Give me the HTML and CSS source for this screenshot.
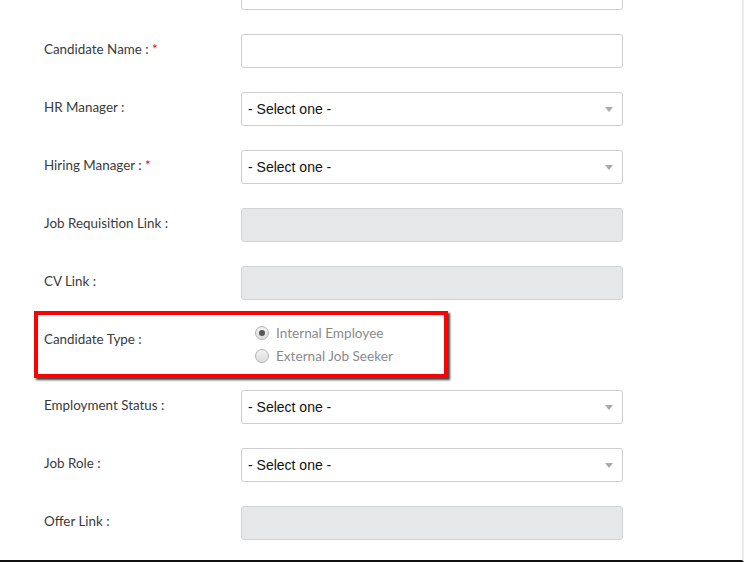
FILE: index.html
```html
<!DOCTYPE html>
<html>
<head>
<meta charset="utf-8">
<link rel="stylesheet" href="styles.css">
</head>
<body>
<div class="frame">
  <div class="form">
    <div class="row">
      <div class="label"></div>
      <div class="field input"></div>
    </div>
    <div class="row">
      <div class="label">Candidate Name : <span class="req">*</span></div>
      <div class="field input"></div>
    </div>
    <div class="row">
      <div class="label">HR Manager :</div>
      <div class="field select"><span>- Select one -</span><i class="arrow"></i></div>
    </div>
    <div class="row">
      <div class="label">Hiring Manager : <span class="req">*</span></div>
      <div class="field select"><span>- Select one -</span><i class="arrow"></i></div>
    </div>
    <div class="row">
      <div class="label">Job Requisition Link :</div>
      <div class="field disabled"></div>
    </div>
    <div class="row">
      <div class="label">CV Link :</div>
      <div class="field disabled"></div>
    </div>
    <div class="row row-radio">
      <div class="label">Candidate Type :</div>
      <div class="radios">
        <label class="radio"><span class="dot checked"></span>Internal Employee</label>
        <label class="radio"><span class="dot"></span>External Job Seeker</label>
      </div>
    </div>
    <div class="row">
      <div class="label">Employment Status :</div>
      <div class="field select"><span>- Select one -</span><i class="arrow"></i></div>
    </div>
    <div class="row">
      <div class="label">Job Role :</div>
      <div class="field select"><span>- Select one -</span><i class="arrow"></i></div>
    </div>
    <div class="row">
      <div class="label">Offer Link :</div>
      <div class="field disabled"></div>
    </div>
  </div>
</div>
</body>
</html>
```
FILE: styles.css
```css
html, body {
  margin: 0;
  padding: 0;
  background: #fff;
}
.frame {
  width: 742px;
  height: 560px;
  border-right: 2px solid #ececec;
  border-bottom: 2px solid #111;
  overflow: hidden;
  background: #fff;
}
.form {
  margin-top: -24px;
  padding-left: 44px;
  display: flex;
  flex-direction: column;
  gap: 24px;
}
.row {
  display: flex;
  align-items: flex-start;
}
.label {
  width: 197px;
  height: 34px;
  line-height: 30px;
  font-family: "Lato", "Open Sans", sans-serif;
  font-size: 13.4px;
  color: #3a3a3a;
  white-space: nowrap;
}
.req {
  color: #d9121b;
}
.field {
  box-sizing: border-box;
  width: 382px;
  height: 34px;
  border: 1px solid #cfcfcf;
  border-radius: 3px;
  background: #fff;
}
.disabled {
  background: #e6e7e8;
  border-color: #d2d3d4;
}
.select {
  display: flex;
  align-items: center;
  justify-content: space-between;
  padding: 0 9px 0 6px;
  font-family: "Liberation Sans", Arial, sans-serif;
  font-size: 14px;
  color: #111;
}
.arrow {
  width: 0;
  height: 0;
  border-left: 4px solid transparent;
  border-right: 4px solid transparent;
  border-top: 5px solid #aaa;
}
.row-radio {
  position: relative;
  margin-top: -2px;
  margin-bottom: -1px;
}
.row-radio .label {
  line-height: 34px;
}
.row-radio::before {
  content: "";
  position: absolute;
  left: -10px;
  top: -11px;
  width: 406px;
  height: 59px;
  border: 4px solid #f00;
  box-shadow: 2px 2px 2px rgba(0, 0, 0, 0.75);
  pointer-events: none;
}
.radios {
  display: flex;
  flex-direction: column;
  padding-left: 14px;
  margin-top: -1px;
}
.radio {
  display: flex;
  align-items: center;
  height: 23px;
  font-family: "Lato", "Open Sans", sans-serif;
  font-size: 13.6px;
  color: #8a8a8a;
}
.dot {
  box-sizing: border-box;
  width: 14px;
  height: 14px;
  border-radius: 50%;
  border: 1px solid #b5b5b5;
  background: linear-gradient(#f2f2f2, #dcdcdc);
  margin-right: 7px;
  display: flex;
  align-items: center;
  justify-content: center;
}
.dot.checked::after {
  content: "";
  width: 6px;
  height: 6px;
  border-radius: 50%;
  background: #555;
}
```
